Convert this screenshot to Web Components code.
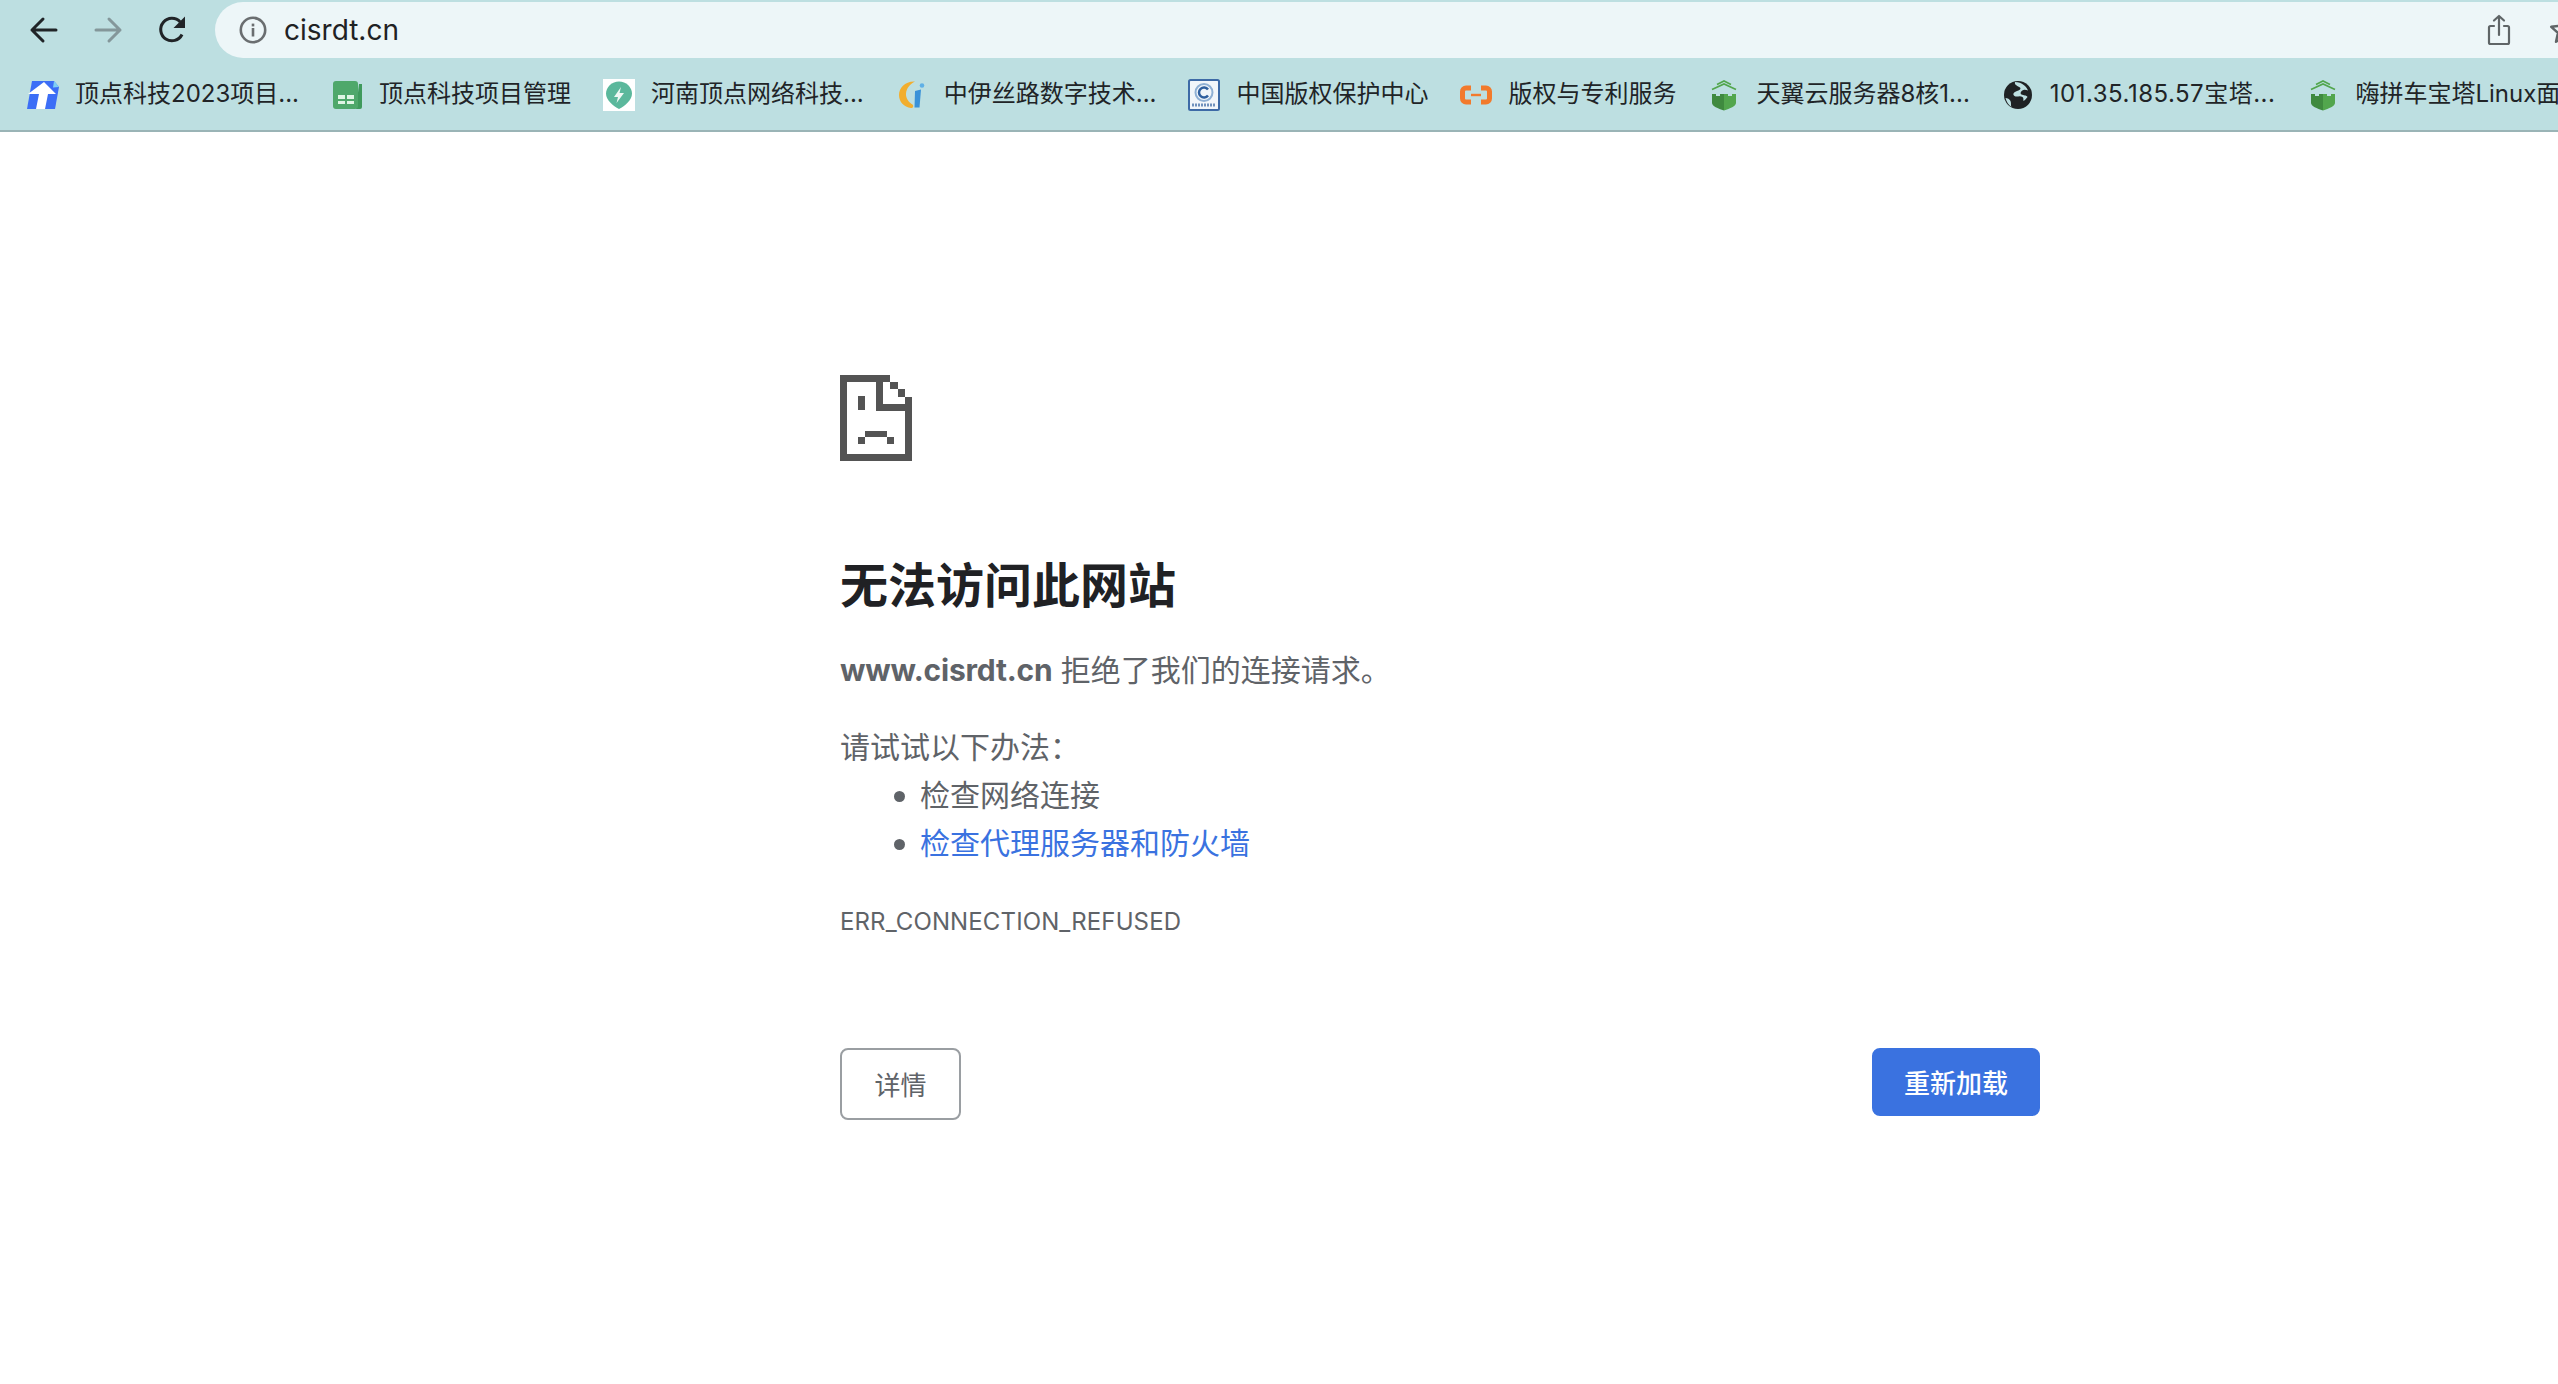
<!DOCTYPE html>
<html lang="zh-CN">
<head>
<meta charset="utf-8">
<title>cisrdt.cn</title>
<style>
  html, body { margin: 0; padding: 0; background: #fff; overflow: hidden; }
  body { width: 2558px; height: 1384px; font-family: "Liberation Sans", "Noto Sans CJK SC", sans-serif; }
</style>
</head>
<body>

<browser-toolbar url="cisrdt.cn"></browser-toolbar>

<bookmark-bar>
  <bookmark-item label="顶点科技2023项目..." icon="doc"></bookmark-item>
  <bookmark-item label="顶点科技项目管理" icon="sheet"></bookmark-item>
  <bookmark-item label="河南顶点网络科技..." icon="bolt"></bookmark-item>
  <bookmark-item label="中伊丝路数字技术..." icon="swirl"></bookmark-item>
  <bookmark-item label="中国版权保护中心" icon="copyright"></bookmark-item>
  <bookmark-item label="版权与专利服务" icon="bracket"></bookmark-item>
  <bookmark-item label="天翼云服务器8核1..." icon="tower"></bookmark-item>
  <bookmark-item label="101.35.185.57宝塔..." icon="globe" wide></bookmark-item>
  <bookmark-item label="嗨拼车宝塔Linux面" icon="tower"></bookmark-item>
</bookmark-bar>

<error-page>
  <error-button slot="left">详情</error-button>
  <error-button slot="right" primary>重新加载</error-button>
</error-page>

<script>
// Browser chrome: nav buttons and the omnibox
class BrowserToolbar extends HTMLElement {
  constructor() {
    super();
    this.attachShadow({ mode: 'open' });
  }

  connectedCallback() {
    const url = this.getAttribute('url') || '';
    this.shadowRoot.innerHTML = `
      <style>
        :host { display: flex; height: 60px; background: #bddfe1; align-items: flex-start; overflow: hidden; }
        .nav { display: flex; align-items: center; height: 60px; padding-left: 29px; gap: 34px; flex: none; }
        .nav svg { display: block; width: 30px; height: 30px; }
        .omnibox {
          flex: none; display: flex; align-items: center; box-sizing: border-box;
          width: 2400px; height: 56px; margin: 2px 0 0 28px; padding-left: 24px;
          background: #edf6f8; border-radius: 28px 0 0 28px;
        }
        .info { display: block; width: 28px; height: 28px; flex: none; }
        .url { margin-left: 17px; font: 400 28px/56px Inter, "Noto Sans", sans-serif; color: #1f2224; }
        .actions { margin-left: auto; display: flex; align-items: center; gap: 37px; width: 128px; flex: none; }
        .actions svg { display: block; flex: none; }
      </style>
      <div class="nav">
        <svg viewBox="0 0 30 30" fill="none" stroke="#202427" stroke-width="3" stroke-linecap="round" stroke-linejoin="round"><path d="M27 15H3M14 4 3 15l11 11"/></svg>
        <svg viewBox="0 0 30 30" fill="none" stroke="#84979a" stroke-width="3" stroke-linecap="round" stroke-linejoin="round"><path d="M3 15h24M16 4l11 11-11 11"/></svg>
        <svg viewBox="0 0 30 30"><path d="M25 19.500A11.200 11.200 0 1 1 23.200 7" fill="none" stroke="#202427" stroke-width="3"/><path d="M28 1.500V13H16.500z" fill="#202427"/></svg>
      </div>
      <div class="omnibox">
        <svg class="info" viewBox="0 0 28 28"><circle cx="14" cy="14" r="12.200" fill="none" stroke="#6a6e70" stroke-width="2.600"/><rect x="12.700" y="12" width="2.600" height="8.500" fill="#6a6e70"/><rect x="12.700" y="7.600" width="2.600" height="2.800" fill="#6a6e70"/></svg>
        <span class="url">${url}</span>
        <div class="actions">
          <svg width="24" height="32" viewBox="0 0 24 32" fill="none" stroke="#5f6567" stroke-width="2.200" stroke-linecap="round" stroke-linejoin="round"><path d="M7 12H3.500A1.500 1.500 0 0 0 2 13.500v15A1.500 1.500 0 0 0 3.500 30h17a1.500 1.500 0 0 0 1.500-1.500v-15a1.500 1.500 0 0 0-1.500-1.500H17M12 21V2M7 6.500 12 2l5 4.500"/></svg>
          <svg width="32" height="32" viewBox="0 0 32 32" fill="none" stroke="#5f6567" stroke-width="2.400" stroke-linejoin="round"><path d="M16 3.500l3.800 8.300 9 1-6.700 6.100 1.900 8.900-8-4.600-8 4.600 1.900-8.900-6.700-6.100 9-1z"/></svg>
        </div>
      </div>
    `;
  }
}

// Row under the toolbar, children are bookmark-item
class BookmarkBar extends HTMLElement {
  constructor() {
    super();
    this.attachShadow({ mode: 'open' });
    this.shadowRoot.innerHTML = `
      <style>
        :host {
          display: flex; box-sizing: border-box; height: 72px; padding-left: 11px;
          background: #bddfe1; border-bottom: 2px solid #9ab4b6; overflow: hidden; align-items: center;
        }
      </style>
      <slot></slot>
    `;
  }
}

const BOOKMARK_ICONS = {
  doc: `<svg viewBox="0 0 32 32"><path d="M5 2H27L32 8 28 30H0z" fill="#3c6ef6"/><path d="M27 2l5 6-6 .5z" fill="#7fd0f4"/><path d="M17 3 29 15H21L18 30H9L12 15H1z" fill="#fff"/></svg>`,
  sheet: `<svg viewBox="0 0 32 32"><path d="M28 5h3v23a2 2 0 0 1-2 2h-4z" fill="#3f9a5c"/><rect x="2" y="2" width="25" height="28" rx="3" fill="#4fa86b"/><path d="M7 16h7v4H7zM16 16h7v4h-7zM7 22h7v3H7zM16 22h7v3h-7z" fill="#dff5e4"/></svg>`,
  bolt: `<svg viewBox="0 0 32 32"><rect width="32" height="32" fill="#fff"/><path d="M16 2.500C23 2.500 29 8 29 14.800 29 21 22 27 16 30 10 27 3 21 3 14.800 3 8 9 2.500 16 2.500z" fill="#5bb89c"/><path d="M18 8l-7 10h4l-1.500 6L21 14h-4.500z" fill="#eef8f4"/></svg>`,
  swirl: `<svg viewBox="0 0 32 32"><path d="M19 2.500C9 2 3 9 3 16c0 7 5 12 12 13 2 .3 3-2 1.500-3.500-3-1.500-7-6-6.500-11C10.500 9 14 5 19 2.500z" fill="#f2ae2e"/><path d="M19 12l6-1.500-1.500 18H18.500z" fill="#3a92d8"/><circle cx="26" cy="6.500" r="2.300" fill="#5fb0e6"/></svg>`,
  copyright: `<svg viewBox="0 0 32 32"><rect x="1" y="1" width="30" height="30" rx="1.500" fill="#f2f6fa" stroke="#3d6aa6" stroke-width="2"/><circle cx="16" cy="13.500" r="8.500" fill="none" stroke="#8fb0d4" stroke-width="2"/><path d="M20 10.500a5 5 0 1 0 0 6" fill="none" stroke="#2f5f9e" stroke-width="2.500"/><path d="M4 26h24" stroke="#6f90bc" stroke-width="3" stroke-dasharray="2 1"/></svg>`,
  bracket: `<svg viewBox="0 0 32 32"><path d="M11 9H6a3.500 3.500 0 0 0-3.500 3.500v7A3.500 3.500 0 0 0 6 23h5M21 9h5a3.500 3.500 0 0 1 3.500 3.500v7A3.500 3.500 0 0 1 26 23h-5" fill="none" stroke="#f27a2c" stroke-width="5"/><rect x="11" y="14.800" width="10" height="2.400" fill="#f27a2c"/></svg>`,
  tower: `<svg viewBox="0 0 32 32"><path d="M16 15h4v2h4v-2h4v9c0 3-6 5.500-12 7.500z" fill="#52a64d"/><path d="M4 15h4v2h4v-2h4v16.500C10 29.500 4 27 4 24z" fill="#3f8a3f"/><path d="M9 5.500 16 2l7 3.500M4 10.500 16 5l12 5.500" fill="none" stroke="#52a64d" stroke-width="1.600"/></svg>`,
  globe: `<svg viewBox="0 0 32 32"><circle cx="16" cy="16" r="14" fill="#1f2224"/><path d="M13 3c-1 3 3 4 5 5.500 1.500 1.500-1 3-3 3.500-3 1-5 3-2.500 5 2.500 1.500 5-1 8 1 1.500 1 .5 3 1 4 1.500-1 3-2.500 4-4-1-2-4-1.500-6-2.500-2-1.500 0-4 2-4.500 1.500-.5 3 0 4.500.5C25 8 20 3 13 3z" fill="#bddfe1"/><path d="M3.500 19c2 0 4 1 5 3 1 2.500 0 5 1 6-3-2-5-5-6-9z" fill="#bddfe1"/></svg>`
};

class BookmarkItem extends HTMLElement {
  constructor() {
    super();
    this.attachShadow({ mode: 'open' });
  }

  connectedCallback() {
    const icon = BOOKMARK_ICONS[this.getAttribute('icon')] || '';
    this.shadowRoot.innerHTML = `
      <style>
        :host { display: flex; flex: none; align-items: center; gap: 16px; padding: 0 16px; height: 70px; }
        .icon { width: 32px; height: 32px; flex: none; }
        .icon svg { display: block; width: 32px; height: 32px; }
        .label { margin-top: -2px; font: 400 24px/32px Inter, "Noto Sans CJK SC", sans-serif; color: #212427; white-space: nowrap; }
        :host([wide]) .label { letter-spacing: 0.5px; }
      </style>
      <span class="icon">${icon}</span>
      <span class="label">${this.getAttribute('label') || ''}</span>
    `;
  }
}

// Chrome's net error interstitial
class ErrorPage extends HTMLElement {
  constructor() {
    super();
    this.attachShadow({ mode: 'open' });
    this.shadowRoot.innerHTML = `
      <style>
        :host {
          display: block; width: 1200px; margin-left: 840px; padding-top: 243px;
          font: 400 30px/48px "Liberation Sans", "Noto Sans CJK SC", sans-serif; color: #5f6368;
        }
        .sad { display: block; width: 72px; height: 86px; }
        h1 { margin: 91px 0 0; font: 600 48px/60px "Noto Sans CJK SC", sans-serif; color: #202124; }
        p { margin: 0; }
        .reason { margin-top: 34px; }
        .reason b { font-family: Inter, "Liberation Sans", sans-serif; font-weight: 700; letter-spacing: -0.2px; }
        .tips { margin-top: 29px; }
        ul { margin: 0; padding: 0 0 0 80px; list-style: none; }
        li { display: flex; align-items: center; }
        li::before { content: ""; flex: none; width: 11px; height: 11px; margin-left: -26px; margin-right: 15px; border-radius: 50%; background: #5f6368; }
        a { color: #3a72e0; text-decoration: none; }
        .code { margin-top: 30px; font: 400 24px/48px Inter, "Liberation Sans", sans-serif; letter-spacing: 0.12px; }
        .buttons { display: flex; justify-content: space-between; align-items: flex-start; margin-top: 102px; }
      </style>
      <svg class="sad" viewBox="0 0 72 86" shape-rendering="crispEdges" fill="#545454">
        <path fill-rule="evenodd" d="M0 0H50.400V7.200H57.600V14.300H64.800V21.500H72V86H0ZM7.200 7.200V78.800H64.800V35.800H36V7.200ZM43.200 7.200V28.700H64.800V21.500H57.600V14.300H50.400V7.200Z"/>
        <rect x="18" y="21" width="7" height="14"/>
        <rect x="25" y="56" width="22" height="6"/><rect x="18" y="62" width="7" height="7"/><rect x="47" y="62" width="7" height="7"/>
      </svg>
      <h1>无法访问此网站</h1>
      <p class="reason"><b>www.cisrdt.cn</b> 拒绝了我们的连接请求。</p>
      <p class="tips">请试试以下办法：</p>
      <ul>
        <li><span>检查网络连接</span></li>
        <li><a href="#">检查代理服务器和防火墙</a></li>
      </ul>
      <div class="code">ERR_CONNECTION_REFUSED</div>
      <div class="buttons">
        <slot name="left"></slot>
        <slot name="right"></slot>
      </div>
    `;
  }
}

class ErrorButton extends HTMLElement {
  constructor() {
    super();
    this.attachShadow({ mode: 'open' });
    this.shadowRoot.innerHTML = `
      <style>
        :host {
          display: block; box-sizing: border-box; height: 72px; width: 121px; text-align: center;
          border: 2px solid #9a9ea2; border-radius: 8px; background: #fff; color: #5f6368;
          font: 400 26px/68px "Noto Sans CJK SC", sans-serif; cursor: pointer;
        }
        :host([primary]) { width: 168px; height: 68px; font-weight: 500; line-height: 64px; background: #3a72e0; border-color: #3a72e0; color: #fff; }
      </style>
      <slot></slot>
    `;
  }
}

customElements.define('browser-toolbar', BrowserToolbar);
customElements.define('bookmark-bar', BookmarkBar);
customElements.define('bookmark-item', BookmarkItem);
customElements.define('error-page', ErrorPage);
customElements.define('error-button', ErrorButton);
</script>
</body>
</html>
